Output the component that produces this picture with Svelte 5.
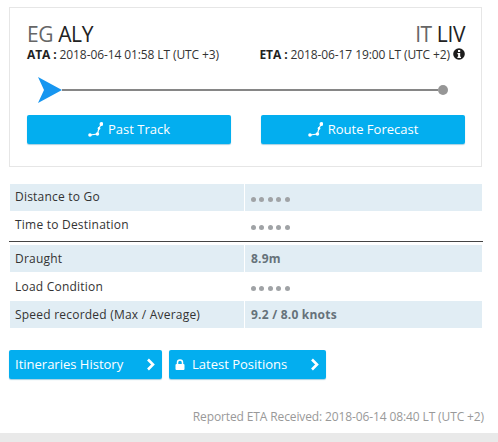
<script>
  const rowsTop = [
    { label: "Distance to Go", locked: true },
    { label: "Time to Destination", locked: true }
  ];
  const rowsBottom = [
    { label: "Draught", value: "8.9m" },
    { label: "Load Condition", locked: true },
    { label: "Speed recorded (Max / Average)", value: "9.2 / 8.0 knots" }
  ];
</script>

{#snippet routeIcon()}
  <svg class="route" viewBox="0 0 15 15" width="15" height="15" aria-hidden="true">
    <path d="M2 13 L9.5 12 L11 6 L13.5 2" fill="none" stroke="#fff" stroke-width="1.2" />
    <circle cx="2" cy="13" r="1.8" fill="#fff" />
    <circle cx="9.4" cy="12" r="1.8" fill="#fff" />
    <circle cx="11" cy="6.4" r="1.3" fill="#fff" />
    <circle cx="13.4" cy="2" r="1.9" fill="#fff" />
  </svg>
{/snippet}

{#snippet chevron()}
  <svg class="chevron" viewBox="0 0 9 13" width="9" height="13" aria-hidden="true">
    <path d="M2 1.5 L7 6.5 L2 11.5" fill="none" stroke="#fff" stroke-width="2.6" />
  </svg>
{/snippet}

{#snippet row(r)}
  <div class="row">
    <div class="label">{r.label}</div>
    <div class="value">
      {#if r.locked}
        <span class="dots"><i></i><i></i><i></i><i></i><i></i></span>
      {:else}
        {r.value}
      {/if}
    </div>
  </div>
{/snippet}

<div class="page">
  <section class="card">
    <div class="ports">
      <div class="port">
        <h2><span>EG</span> ALY</h2>
        <p><b>ATA :</b> 2018-06-14 01:58 LT (UTC +3)</p>
      </div>
      <div class="port right">
        <h2><span>IT</span> LIV</h2>
        <p>
          <b>ETA :</b> 2018-06-17 19:00 LT (UTC +2)
          <svg class="info" viewBox="0 0 12 12" width="12" height="12" aria-hidden="true">
            <circle cx="6" cy="6" r="5.8" fill="#1c1c1c" />
            <rect x="5" y="2" width="2.2" height="2" fill="#fff" />
            <path d="M4.4 5 H7.2 V8.8 H8 V10 H4.4 V8.8 H5.1 V6.2 H4.4 Z" fill="#fff" />
          </svg>
        </p>
      </div>
    </div>

    <div class="track">
      <svg class="ship" viewBox="0 0 25 26" width="25" height="26" aria-hidden="true">
        <path d="M1 0 L25 13 L1 26 L7 13 Z" fill="#1796f0" />
      </svg>
      <div class="line"></div>
      <div class="end"></div>
    </div>

    <div class="actions">
      <button>{@render routeIcon()}<span>Past Track</span></button>
      <button>{@render routeIcon()}<span>Route Forecast</span></button>
    </div>
  </section>

  <section class="table">
    <div class="group">
      {#each rowsTop as r}
        {@render row(r)}
      {/each}
    </div>
    <div class="group">
      {#each rowsBottom as r}
        {@render row(r)}
      {/each}
    </div>
  </section>

  <div class="links">
    <button class="link first"><span>Itineraries History</span>{@render chevron()}</button>
    <button class="link second">
      <svg class="lock" viewBox="0 0 10 11" width="10" height="11" aria-hidden="true">
        <path d="M2.5 5 V3.4 a2.5 2.5 0 0 1 5 0 V5" fill="none" stroke="#fff" stroke-width="1.5" />
        <rect x="0.5" y="5" width="9" height="6" rx="1" fill="#fff" />
      </svg>
      <span>Latest Positions</span>{@render chevron()}
    </button>
  </div>

  <p class="reported">Reported ETA Received: 2018-06-14 08:40 LT (UTC +2)</p>
</div>
<div class="band"></div>

<style>
  :global(body) {
    background: #fff;
    font-family: "Open Sans", "DejaVu Sans", sans-serif;
    color: #333;
  }

  .page {
    box-sizing: border-box;
    height: 433px;
    padding: 7px 14px 0 9px;
    overflow: hidden;
  }

  .card {
    box-sizing: border-box;
    width: 473px;
    height: 160px;
    border: 1px solid #e6e6e6;
    padding: 13px 16px 0 17px;
  }

  .ports {
    display: flex;
    justify-content: space-between;
  }

  .port h2 {
    margin: 0;
    font-size: 21px;
    line-height: 26px;
    font-weight: 400;
    color: #222;
    letter-spacing: -0.4px;
  }

  .port h2 span {
    color: #666;
  }

  .port p {
    margin: 0;
    font-size: 12px;
    line-height: 16px;
    color: #333;
    letter-spacing: -0.1px;
    white-space: nowrap;
  }

  .port b {
    color: #222;
  }

  .right {
    text-align: right;
  }

  .info {
    vertical-align: -1px;
  }

  .track {
    display: flex;
    align-items: center;
    height: 26px;
    margin-top: 14px;
    padding: 0 0 0 10px;
    margin-right: 17px;
  }

  .ship {
    flex: none;
  }

  .line {
    flex: 1;
    height: 2px;
    background: #868686;
  }

  .end {
    flex: none;
    width: 10px;
    height: 10px;
    border-radius: 50%;
    background: #969696;
  }

  .actions {
    display: flex;
    justify-content: space-between;
    margin-top: 12px;
  }

  button {
    display: inline-flex;
    align-items: center;
    justify-content: center;
    gap: 5px;
    box-sizing: border-box;
    height: 29px;
    padding: 0;
    border: 0;
    border-radius: 2px;
    background: #03aeef;
    box-shadow: 0 1px 1px rgba(3, 120, 170, 0.35);
    color: #fff;
    font-family: inherit;
    font-size: 13px;
    white-space: pre;
  }

  button span {
    position: relative;
    top: -1px;
  }

  .actions button {
    width: 204px;
  }

  .table {
    width: 472px;
    margin: 17px 0 0 1px;
  }

  .group:first-child {
    border-bottom: 1px solid #444;
    margin-left: -1px;
    padding-left: 1px;
    width: 473px;
    padding-bottom: 1px;
    margin-bottom: 3px;
  }

  .group:first-child .row {
    width: 472px;
  }

  .group:first-child .label {
    padding-bottom: 2px;
    box-sizing: border-box;
  }

  .row {
    display: grid;
    grid-template-columns: 235px 1fr;
    height: 28px;
    align-items: center;
    font-size: 12px;
    letter-spacing: 0.22px;
    color: #333;
  }

  .row:nth-child(odd) {
    background: #e1edf4;
    height: 27px;
  }

  .group:first-child .row:nth-child(even) {
    height: 29px;
  }

  .group:last-child .row:nth-child(even) {
    height: 29px;
  }

  .label {
    padding-left: 5px;
    height: 100%;
    display: flex;
    align-items: center;
    border-right: 1px solid #fff;
  }

  .value {
    padding-left: 6px;
    font-weight: 700;
    color: #66727a;
    font-size: 12px;
  }

  .dots {
    display: flex;
    gap: 3.4px;
    padding-top: 3px;
  }

  .dots i {
    width: 5px;
    height: 5px;
    border-radius: 50%;
    background: #a0a3a6;
  }

  .links {
    display: flex;
    gap: 7px;
    margin-top: 22px;
  }

  .link {
    justify-content: space-between;
    padding: 0 7px 0 6px;
  }

  .first {
    width: 153px;
  }

  .second {
    width: 157px;
    justify-content: flex-start;
    gap: 0;
  }

  .second .lock {
    margin-right: 7px;
  }

  .second .chevron {
    margin-left: auto;
  }

  .reported {
    margin: 29px 0 0;
    width: 475px;
    text-align: right;
    font-size: 12px;
    line-height: 18px;
    letter-spacing: -0.12px;
    color: #999;
    white-space: nowrap;
  }

  .band {
    height: 9px;
    background: #e9e9e9;
  }
</style>
